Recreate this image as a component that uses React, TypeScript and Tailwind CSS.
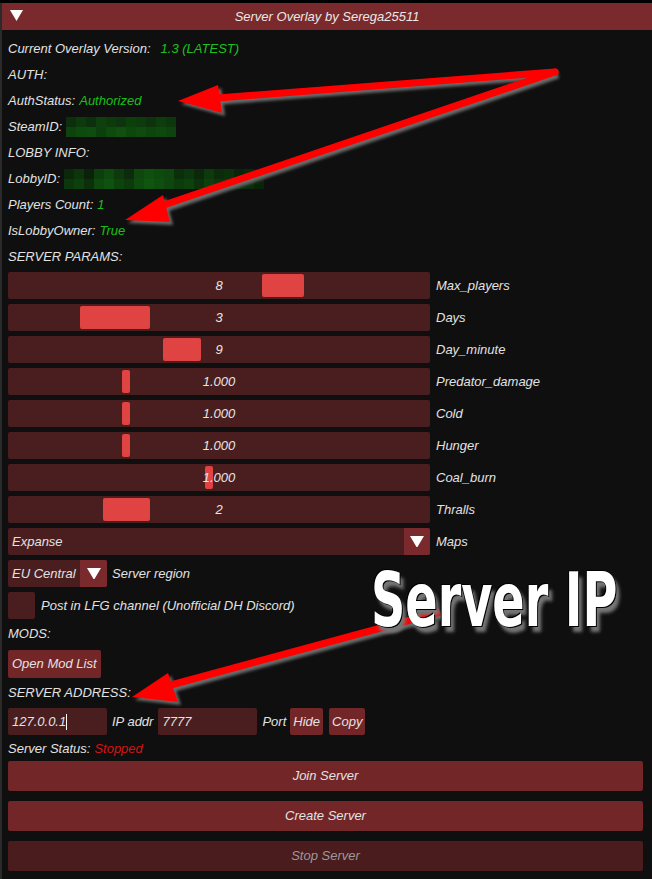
import React from "react";

const steamBlocks = [
  ["#0c2e0c", "#0d3a0d", "#0b300b", "#0e3f0e", "#0c3a0c", "#0d350d", "#0b400b", "#0e3b0e", "#0c330c", "#0d3d0d", "#0c360c"],
  ["#0e420e", "#0d4a0d", "#0f4c0f", "#0d3f0d", "#0e4a0e", "#104f10", "#0d470d", "#0f4a0f", "#0e440e", "#0d480d", "#0e420e"],
];
const lobbyBlocks = [
  ["#0b280b", "#0c350c", "#0a220a", "#0d3f0d", "#0e4a0e", "#0c3a0c", "#0b2c0b", "#0e480e", "#0f500f", "#0d4a0d", "#0e460e", "#0b2f0b", "#0c370c", "#0a280a", "#0d3a0d", "#0b2b0b", "#0c300c", "#0a240a", "#0b2a0b", "#0a200a"],
  ["#0c360c", "#0d400d", "#0b300b", "#0e4a0e", "#0f520f", "#0d440d", "#0c3a0c", "#0e4c0e", "#0f540f", "#0e4e0e", "#0d470d", "#0c3c0c", "#0d420d", "#0b330b", "#0d400d", "#0c380c", "#0c360c", "#0b2e0b", "#0b2c0b", "#0a240a"],
];

function Pixels({ blocks, size }: { blocks: string[][]; size: number }) {
  return (
    <div className="flex flex-col">
      {blocks.map((row, i) => (
        <div key={i} className="flex">
          {row.map((c, j) => (
            <div key={j} style={{ width: size, height: 10, background: c }} />
          ))}
        </div>
      ))}
    </div>
  );
}

function Slider({ value, left, width, label }: { value: string; left: number; width: number; label: string }) {
  return (
    <div className="flex items-center h-[27px]">
      <div className="relative w-[422px] h-[27px] bg-[#4a1d1f] rounded-[2px] shrink-0">
        <div className="absolute top-[2px] bottom-[2px] bg-[#e04442] rounded-[2px]" style={{ left, width }} />
        <div className="absolute inset-0 flex items-center justify-center text-[#e6e6e6]">{value}</div>
      </div>
      <span className="ml-[6px]">{label}</span>
    </div>
  );
}

function Tri({ size = 12 }: { size?: number }) {
  return (
    <svg width={size} height={size * 0.85} viewBox="0 0 12 10">
      <polygon points="0,0 12,0 6,10" fill="#ffffff" />
    </svg>
  );
}

export default function App() {
  const sliders = [
    { value: "8", left: 254, width: 42, label: "Max_players" },
    { value: "3", left: 72, width: 70, label: "Days" },
    { value: "9", left: 155, width: 38, label: "Day_minute" },
    { value: "1.000", left: 114, width: 8, label: "Predator_damage" },
    { value: "1.000", left: 114, width: 8, label: "Cold" },
    { value: "1.000", left: 114, width: 8, label: "Hunger" },
    { value: "1.000", left: 197, width: 8, label: "Coal_burn" },
    { value: "2", left: 95, width: 47, label: "Thralls" },
  ];
  return (
    <div className="relative w-[652px] h-[879px] bg-black overflow-hidden font-['Liberation_Sans',Arial,sans-serif] italic text-[13px] text-[#e2e2e2]">
      <div className="h-[3px] bg-black" />
      <div className="h-[876px] bg-[#0f0f0f] border-l-2 border-[#2a2a2a] flex flex-col">
        {/* title bar */}
        <div className="relative h-[27px] bg-[#7a2a2c] flex items-center justify-center">
          <div className="absolute left-[8px] top-[7px]">
            <Tri size={13} />
          </div>
          <span className="text-[#e8e8e8]">Server Overlay by Serega25511</span>
        </div>
        <div className="flex flex-col pl-[6px] pr-[9px] pt-[6px]">
          <div className="h-[26px] flex items-center">
            Current Overlay Version:<span className="ml-[10px] text-[#1ec21e]">1.3 (LATEST)</span>
          </div>
          <div className="h-[26px] flex items-center">AUTH:</div>
          <div className="h-[26px] flex items-center">
            AuthStatus: <span className="ml-[4px] text-[#19c019]">Authorized</span>
          </div>
          <div className="h-[26px] flex items-center">
            SteamID:
            <div className="ml-[4px]">
              <Pixels blocks={steamBlocks} size={10} />
            </div>
          </div>
          <div className="h-[26px] flex items-center">LOBBY INFO:</div>
          <div className="h-[26px] flex items-center">
            LobbyID:
            <div className="ml-[4px]">
              <Pixels blocks={lobbyBlocks} size={10} />
            </div>
          </div>
          <div className="h-[26px] flex items-center">
            Players Count: <span className="ml-[4px] text-[#19c019]">1</span>
          </div>
          <div className="h-[26px] flex items-center">
            IsLobbyOwner: <span className="ml-[4px] text-[#19c019]">True</span>
          </div>
          <div className="h-[26px] flex items-center">SERVER PARAMS:</div>

          <div className="flex flex-col gap-[5px] mt-[2px]">
            {sliders.map((s, i) => (
              <Slider key={i} {...s} />
            ))}
            <div className="flex items-center h-[27px]">
              <div className="w-[422px] h-[27px] bg-[#4a1d1f] rounded-[2px] flex items-center shrink-0 overflow-hidden">
                <span className="flex-1 pl-[4px]">Expanse</span>
                <div className="w-[26px] h-full bg-[#7a2a2c] flex items-center justify-center">
                  <Tri size={14} />
                </div>
              </div>
              <span className="ml-[6px]">Maps</span>
            </div>
            <div className="flex items-center h-[27px]">
              <div className="w-[99px] h-[27px] bg-[#4a1d1f] rounded-[2px] flex items-center overflow-hidden">
                <span className="flex-1 pl-[4px]">EU Central</span>
                <div className="w-[27px] h-full bg-[#7a2a2c] flex items-center justify-center">
                  <Tri size={14} />
                </div>
              </div>
              <span className="ml-[5px]">Server region</span>
            </div>
            <div className="flex items-center h-[27px]">
              <div className="w-[27px] h-[27px] bg-[#4a1d1f] rounded-[2px]" />
              <span className="ml-[6px]">Post in LFG channel (Unofficial DH Discord)</span>
            </div>
          </div>
          <div className="h-[26px] flex items-center mt-[2px]">MODS:</div>
          <div className="flex mt-[3px]">
            <div className="h-[28px] px-[4px] bg-[#722628] rounded-[2px] flex items-center">Open Mod List</div>
          </div>
          <div className="h-[26px] flex items-center mt-[2px]">SERVER ADDRESS:</div>
          <div className="flex items-center h-[27px] mt-[2px]">
            <div className="w-[99px] h-[27px] bg-[#4a1d1f] rounded-[2px] flex items-center pl-[4px]">
              127.0.0.1<span className="inline-block w-[1px] h-[16px] bg-white" />
            </div>
            <span className="ml-[5px]">IP addr</span>
            <div className="ml-[5px] w-[99px] h-[27px] bg-[#4a1d1f] rounded-[2px] flex items-center pl-[4px]">7777</div>
            <span className="ml-[5px]">Port</span>
            <div className="ml-[4px] h-[27px] px-[3px] bg-[#722628] rounded-[2px] flex items-center">Hide</div>
            <div className="ml-[6px] h-[27px] px-[3px] bg-[#722628] rounded-[2px] flex items-center">Copy</div>
          </div>
          <div className="h-[24px] flex items-center mt-[2px]">
            Server Status: <span className="ml-[4px] text-[#d41414]">Stopped</span>
          </div>
          <div className="flex flex-col gap-[10px]">
            <div className="h-[30px] bg-[#722628] rounded-[2px] flex items-center justify-center">Join Server</div>
            <div className="h-[30px] bg-[#722628] rounded-[2px] flex items-center justify-center">Create Server</div>
            <div className="h-[30px] bg-[#4a1c1e] rounded-[2px] flex items-center justify-center text-[#9a9a9a]">Stop Server</div>
          </div>
        </div>
      </div>

      {/* annotation arrows */}
      <svg className="absolute inset-0 pointer-events-none" width="652" height="879" viewBox="0 0 652 879">
        <defs>
          <filter id="blur" x="-20%" y="-20%" width="140%" height="140%">
            <feGaussianBlur stdDeviation="1.5" />
          </filter>
        </defs>
        <g transform="translate(3,3)" filter="url(#blur)" fill="#6a6a6a" stroke="#6a6a6a">
          <line x1="555" y1="72" x2="205" y2="99" strokeWidth="7" />
          <polygon points="178,101 218,85 222,113" strokeWidth="0" />
          <line x1="555" y1="72" x2="155" y2="208" strokeWidth="7" />
          <polygon points="125,220 163,195 170,222" strokeWidth="0" />
          <line x1="440" y1="612" x2="160" y2="688" strokeWidth="7" />
          <polygon points="132,697 168,673 178,702" strokeWidth="0" />
        </g>
        <g fill="#ff0000" stroke="#ff0000">
          <line x1="555" y1="72" x2="205" y2="99" strokeWidth="7" strokeLinecap="round" />
          <polygon points="178,101 218,85 222,113" strokeWidth="0" />
          <line x1="555" y1="72" x2="155" y2="208" strokeWidth="7" strokeLinecap="round" />
          <polygon points="125,220 163,195 170,222" strokeWidth="0" />
          <line x1="440" y1="612" x2="160" y2="688" strokeWidth="7" />
          <polygon points="132,697 168,673 178,702" strokeWidth="0" />
        </g>
      </svg>
      <div className="absolute left-[371px] top-[563px] not-italic font-bold font-['DejaVu_Sans_Condensed','DejaVu_Sans',sans-serif] text-[53px] leading-none text-white tracking-[0px] origin-top-left scale-y-[1.4] [text-shadow:-1px_-1px_0_#000,1px_1px_0_#000,4px_4px_3px_#777]">
        Server IP
      </div>
    </div>
  );
}
